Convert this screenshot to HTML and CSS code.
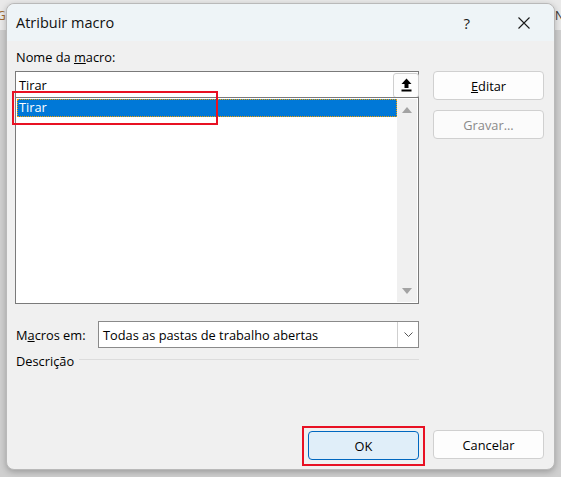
FILE: index.html
```html
<!DOCTYPE html>
<html lang="pt">
<head>
<meta charset="utf-8">
<title>Atribuir macro</title>
<link rel="stylesheet" href="styles.css">
</head>
<body>
<div class="desk">
  <span class="bg-g">G</span>
  <span class="bg-n">N</span>
  <div class="dialog">
    <div class="titlebar">
      <span class="title">Atribuir macro</span>
      <span class="help">?</span>
      <svg class="close" width="12" height="12" viewBox="0 0 12 12"><path d="M0.5 0.5 L11.5 11.5 M11.5 0.5 L0.5 11.5" stroke="#1a1a1a" stroke-width="1.1" fill="none"/></svg>
    </div>
    <div class="content">
      <div class="left">
        <div class="label">Nome da <u>m</u>acro:</div>
        <div class="namebox">
          <span class="nametext">Tirar</span>
          <span class="upbtn">
            <svg width="11" height="14" viewBox="0 0 11 14"><path d="M5.5 0.5 L10.5 6 L7.5 6 L7.5 10 L3.5 10 L3.5 6 L0.5 6 Z" fill="#000"/><rect x="0.5" y="11.5" width="10" height="2" fill="#000"/></svg>
          </span>
        </div>
        <div class="listbox">
          <div class="items">
            <div class="item sel">Tirar</div>
          </div>
          <div class="vscroll">
            <svg width="10" height="6" viewBox="0 0 10 6"><path d="M5 0 L10 6 L0 6 Z" fill="#a3a3a3"/></svg>
            <svg width="10" height="6" viewBox="0 0 10 6"><path d="M0 0 L10 0 L5 6 Z" fill="#a3a3a3"/></svg>
          </div>
        </div>
        <div class="macrosrow">
          <span class="label2">M<u>a</u>cros em:</span>
          <div class="combo">
            <span class="combotext">Todas as pastas de trabalho abertas</span>
            <span class="combobtn"><svg width="9" height="5" viewBox="0 0 9 5"><path d="M0.5 0.5 L4.5 4.5 L8.5 0.5" stroke="#555" stroke-width="1" fill="none"/></svg></span>
          </div>
        </div>
        <div class="descrow">
          <span>Descrição</span>
          <span class="rule"></span>
        </div>
      </div>
      <div class="right">
        <div class="btn"><u>E</u>ditar</div>
        <div class="btn disabled">Gravar...</div>
      </div>
    </div>
    <div class="footer">
      <div class="okwrap"><div class="btn ok">OK</div></div>
      <div class="btn">Cancelar</div>
    </div>
    <div class="hl hl-item"></div>
  </div>
</div>
</body>
</html>
```
FILE: styles.css
```css
* { box-sizing: border-box; }
html, body { margin: 0; padding: 0; }
body {
  width: 561px;
  height: 477px;
  overflow: hidden;
  background: #c9c9c9;
  font-family: "Open Sans", "Noto Sans", sans-serif;
  font-size: 12.8px;
  color: #000;
}
.desk {
  position: relative;
  width: 561px;
  height: 477px;
  padding: 3px 0 0 6px;
  background: linear-gradient(#e9e9e9 0, #e9e9e9 30px, #cfcfcf 30px);
}
.bg-g { position: absolute; left: -3px; top: 7px; font-size: 12px; color: #a06a30; }
.bg-n { position: absolute; left: 555px; top: 7px; font-size: 12px; color: #333; }
.dialog {
  position: relative;
  width: 549px;
  height: 467px;
  background: #f0f0f0;
  border: 1px solid #b9b9b9;
  border-radius: 8px;
  box-shadow: 0 2px 6px rgba(0,0,0,0.25);
  display: flex;
  flex-direction: column;
}
.titlebar {
  height: 37px;
  background: #eef4f7;
  border-radius: 8px 8px 0 0;
  display: flex;
  align-items: center;
  padding: 0 0 0 9px;
}
.title { font-size: 14.5px; flex: 1; padding-bottom: 1px; color: #111; }
.help { font-size: 15px; margin-right: 48px; color: #1a1a1a; }
.close { margin-right: 24px; }
.content {
  display: flex;
  padding: 8px 0 0 8px;
  gap: 14px;
}
.left { width: 404px; display: flex; flex-direction: column; }
.label { height: 17px; line-height: 17px; margin: 0 0 5px 1px; }
.namebox {
  height: 26px;
  background: #fff;
  border: 1px solid #7a7a7a;
  border-bottom: none;
  display: flex;
  align-items: center;
  justify-content: space-between;
  padding: 0 0 0 3px;
}
.upbtn {
  width: 26px;
  height: 25px;
  border: 1px solid #cfcfcf;
  border-radius: 3px;
  background: #fdfdfd;
  display: flex;
  align-items: center;
  justify-content: center;
  margin-top: 1px;
  margin-right: -1px;
}
.listbox {
  height: 207px;
  background: #fff;
  border: 1px solid #7a7a7a;
  display: flex;
  padding: 1px;
}
.items { flex: 1; }
.item { height: 18px; line-height: 17px; padding-left: 2px; }
.item.sel {
  background: #0078d7;
  color: #fff;
  outline: 1px dotted #f2a000;
  outline-offset: -1px;
}
.vscroll {
  width: 20px;
  background: #f0f0f0;
  display: flex;
  flex-direction: column;
  justify-content: space-between;
  align-items: center;
  padding: 8px 0 8px 0;
}
.macrosrow {
  display: flex;
  align-items: center;
  margin-top: 17px;
  height: 27px;
}
.label2 { width: 83px; padding-left: 1px; }
.combo {
  flex: 1;
  height: 27px;
  background: #fff;
  border: 1px solid #8a8a8a;
  display: flex;
  align-items: center;
  padding-left: 4px;
}
.combotext { flex: 1; }
.combobtn {
  width: 21px;
  height: 25px;
  border-left: 1px solid #cfcfcf;
  display: flex;
  align-items: center;
  justify-content: center;
}
.descrow {
  display: flex;
  align-items: center;
  margin-top: 5px;
  height: 16px;
  padding-left: 1px;
}
.rule { flex: 1; height: 1px; background: #dcdcdc; margin-left: 5px; margin-top: -4px; }
.right { width: 111px; display: flex; flex-direction: column; gap: 10px; padding-top: 22px; }
.btn {
  width: 111px;
  height: 29px;
  background: #fdfdfd;
  border: 1px solid #d0d0d0;
  border-radius: 4px;
  display: flex;
  align-items: center;
  justify-content: center;
}
.btn.disabled { color: #8a8a8a; background: #fbfbfb; }
.footer {
  margin-top: auto;
  display: flex;
  justify-content: flex-end;
  gap: 14px;
  padding: 0 10px 8px 0;
}
.okwrap {
  border: 2px solid #e81123;
  padding: 3px 4px 4px 4px;
  margin: -4px -6px -5px 0;
}
.btn.ok {
  background: #e0eef9;
  border-color: #0067c0;
}
.hl {
  position: absolute;
  border: 2px solid #e81123;
  pointer-events: none;
}
.hl-item { left: 5px; top: 87px; width: 206px; height: 34px; }
```
